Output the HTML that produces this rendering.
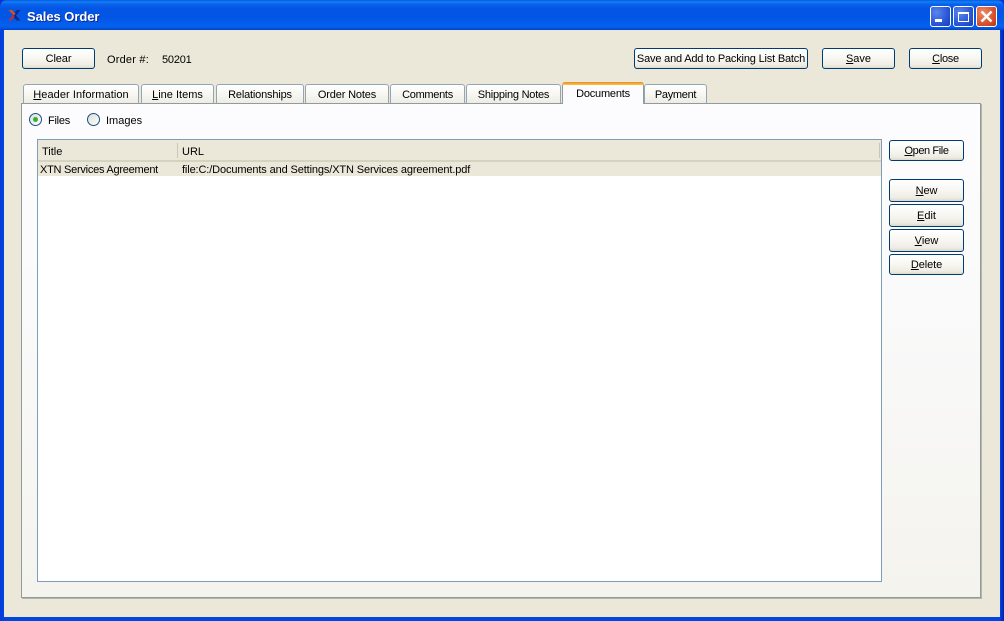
<!DOCTYPE html>
<html><head><meta charset="utf-8">
<style>
html,body{margin:0;padding:0;width:1004px;height:621px;overflow:hidden;background:#0831d9}
*{box-sizing:border-box}
body{font-family:"Liberation Sans","DejaVu Sans",sans-serif;font-size:11px;color:#000;position:relative}
.a{position:absolute;white-space:nowrap}
#win{position:absolute;left:0;top:0;width:1004px;height:621px;background:linear-gradient(90deg,#0a3ce0 0,#0040d8 2px,#0046e0 4px,#0046e0 1000px,#0030c8 1002px,#0020b0 1004px);border-radius:7px 7px 0 0;overflow:hidden}
#tb{position:absolute;left:0;top:0;width:1004px;height:30px;background:linear-gradient(180deg,#0a58e0 0,#0f80f6 2px,#0a62ea 4px,#0355e4 9px,#0355e6 18px,#0462f0 26px,#0358e0 28px,#0240c8 30px)}
#title{left:27px;top:9px;color:#fff;font-weight:bold;font-size:13px;line-height:16px;letter-spacing:-.05px;text-shadow:1px 1px 0 #0f2a90}
#client{position:absolute;left:4px;top:30px;width:996px;height:587px;background:#ebe8d9}
.btn{position:absolute;border:1px solid #003c74;border-radius:3px;background:linear-gradient(180deg,#fff 0,#f7f6f1 50%,#eeece3 85%,#dcd8cc 100%);text-align:center;line-height:21px;white-space:nowrap}
.btn u{text-decoration:underline}
.tab{position:absolute;top:84px;height:20px;border:1px solid #94a6b4;border-bottom:0;border-radius:3px 3px 0 0;background:linear-gradient(180deg,#fff 0,#f7f6f1 50%,#ecebe2 100%);text-align:center;line-height:20px;white-space:nowrap}
#panel{position:absolute;left:21px;top:103px;width:960px;height:495px;border:1px solid #919b9c;background:linear-gradient(180deg,#fcfcfe 0,#fbfbfc 30%,#f4f3ee 100%);box-shadow:1px 1px 0 #b5b5ac}
#atab{position:absolute;left:562px;top:82px;width:82px;height:22px;background:#fcfcfe;border:1px solid #919b9c;border-bottom:0;border-top:0;border-radius:3px 3px 0 0;text-align:center;line-height:20px;letter-spacing:-.2px;padding-top:2px}
#atab:before{content:"";position:absolute;left:-1px;right:-1px;top:0;height:3px;background:linear-gradient(180deg,#e68b2c,#ffc73c);border-radius:3px 3px 0 0}
#tbl{position:absolute;left:37px;top:139px;width:845px;height:443px;border:1px solid #7f9db9;background:#fff}
.radio{position:absolute;width:13px;height:13px;border:1px solid #1c5180;border-radius:50%;background:linear-gradient(135deg,#dcdcd7,#fff)}
.wb{position:absolute;top:6px;width:21px;height:21px;border:1px solid #fff;border-radius:3px;background:radial-gradient(circle at 30% 30%,#5a86ee,#2a55d5 60%,#1a3db5)}
</style></head><body>
<div id="win">
<div id="tb"></div>
<svg class="a" style="left:8px;top:10px" width="13" height="11" viewBox="0 0 13 11"><path d="M12.500 0H8.500L4.500 5.500L8.500 10.500H12.500L8 5.500z" fill="#0b2a8c"/><path d="M0.500 0H4L7.500 3.500L6 5.500L3 2.500z" fill="#d8501e"/><path d="M5 4.500L6.500 6.500L3.500 10.500H0.500z" fill="#c0302a"/></svg>
<div class="a" id="title">Sales Order</div>
<div class="wb" style="left:930px"><svg style="position:absolute;left:0;top:0" width="19" height="19"><rect x="4" y="12" width="7" height="3" fill="#fff"/></svg></div>
<div class="wb" style="left:953px"><svg style="position:absolute;left:0;top:0" width="19" height="19"><path d="M4.500 5.500h10v9h-10z" fill="none" stroke="#fff"/><rect x="4" y="5" width="11" height="2" fill="#fff"/></svg></div>
<div class="wb" style="left:976px;background:radial-gradient(circle at 30% 30%,#ee8a64,#d9512c 60%,#b53a16)"><svg style="position:absolute;left:0;top:0" width="19" height="19"><path d="M4.500 4.500l10 10M14.500 4.500l-10 10" stroke="#fff" stroke-width="2.500"/></svg></div>
<div id="client"></div>

<div class="btn" style="left:22px;top:48px;width:73px;height:21px;letter-spacing:-.1px">Clear</div>
<div class="a" style="left:107px;top:53px;line-height:14px;letter-spacing:.2px">Order #:</div>
<div class="a" style="left:162px;top:53px;line-height:14px;letter-spacing:-.2px">50201</div>
<div class="btn" style="left:634px;top:48px;width:174px;height:21px;letter-spacing:-.18px">Save and Add to Packing List Batch</div>
<div class="btn" style="left:822px;top:48px;width:73px;height:21px"><u>S</u>ave</div>
<div class="btn" style="left:909px;top:48px;width:73px;height:21px;letter-spacing:-.3px"><u>C</u>lose</div>

<div class="tab" style="left:23px;width:116px;line-height:21px;letter-spacing:.07px"><u>H</u>eader Information</div>
<div class="tab" style="left:141px;width:73px;line-height:21px"><u>L</u>ine Items</div>
<div class="tab" style="left:216px;width:88px;line-height:21px;letter-spacing:-.18px">Relationships</div>
<div class="tab" style="left:305px;width:84px;line-height:21px;letter-spacing:-.15px">Order Notes</div>
<div class="tab" style="left:390px;width:75px;line-height:21px;letter-spacing:-.3px">Comments</div>
<div class="tab" style="left:466px;width:95px;line-height:21px;letter-spacing:-.23px">Shipping Notes</div>
<div class="tab" style="left:644px;width:63px;line-height:21px;letter-spacing:-.3px">Payment</div>
<div id="panel"></div>
<div id="atab">Documents</div>

<div class="radio" style="left:29px;top:113px"><div style="position:absolute;left:3px;top:3px;width:5px;height:5px;border-radius:50%;background:#35b035"></div></div>
<div class="a" style="left:48px;top:114px;line-height:14px;letter-spacing:-.25px">Files</div>
<div class="radio" style="left:87px;top:113px"></div>
<div class="a" style="left:106px;top:114px;line-height:14px">Images</div>

<div id="tbl"></div>
<div class="a" style="left:38px;top:140px;width:843px;height:22px;background:#ebe8d9;border-bottom:2px solid #d6d2c2"></div>
<div class="a" style="left:177px;top:143px;width:1px;height:15px;background:#c9c6b6"></div>
<div class="a" style="left:879px;top:143px;width:1px;height:15px;background:#c9c6b6"></div>
<div class="a" style="left:42px;top:145px;line-height:14px">Title</div>
<div class="a" style="left:182px;top:145px;line-height:14px">URL</div>
<div class="a" style="left:38px;top:162px;width:843px;height:14px;background:#ebe8d9"></div>
<div class="a" style="left:40px;top:163px;line-height:14px;letter-spacing:-.25px">XTN Services Agreement</div>
<div class="a" style="left:182px;top:163px;line-height:14px;letter-spacing:-.125px">file:C:/Documents and Settings/XTN Services agreement.pdf</div>

<div class="btn" style="left:889px;top:140px;width:75px;height:21px;letter-spacing:-.4px"><u>O</u>pen File</div>
<div class="btn" style="left:889px;top:179px;width:75px;height:23px;line-height:23px;letter-spacing:-.1px"><u>N</u>ew</div>
<div class="btn" style="left:889px;top:204px;width:75px;height:23px;line-height:23px"><u>E</u>dit</div>
<div class="btn" style="left:889px;top:229px;width:75px;height:23px;line-height:23px"><u>V</u>iew</div>
<div class="btn" style="left:889px;top:254px;width:75px;height:21px;letter-spacing:-.1px"><u>D</u>elete</div>
</div>
</body></html>
